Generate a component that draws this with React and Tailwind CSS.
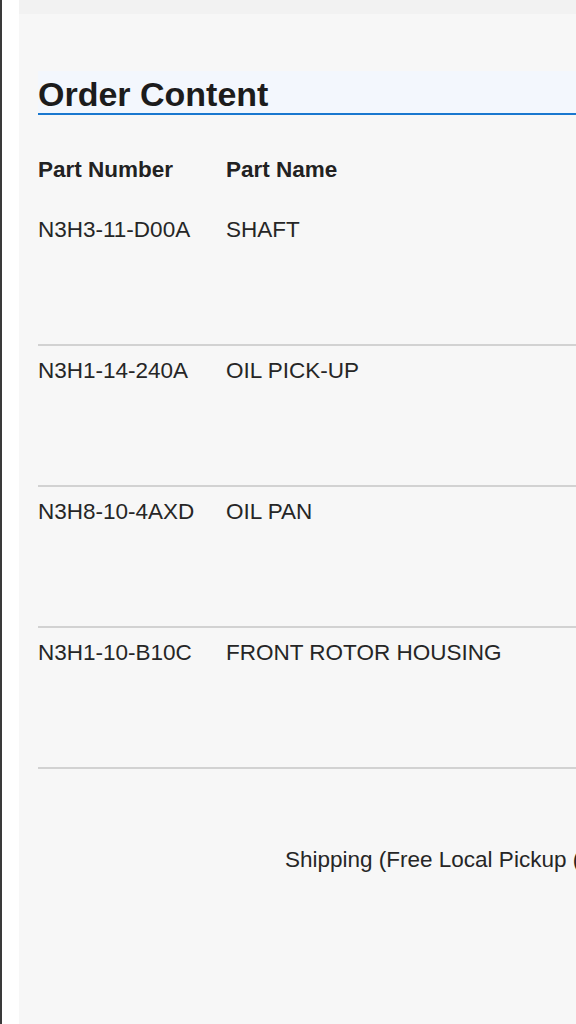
import React from 'react';

const parts = [
    { number: 'N3H3-11-D00A', name: 'SHAFT' },
    { number: 'N3H1-14-240A', name: 'OIL PICK-UP' },
    { number: 'N3H8-10-4AXD', name: 'OIL PAN' },
    { number: 'N3H1-10-B10C', name: 'FRONT ROTOR HOUSING' },
];

const App = () => {
    return (
        <div
            className="flex min-h-[1024px] w-[576px] overflow-hidden bg-white text-[#222]"
            style={{ fontFamily: '"Liberation Sans", Arial, sans-serif' }}
        >
            <div className="w-[2px] shrink-0 bg-[#3a3a3a]" />
            <div className="w-[17px] shrink-0 bg-white" />
            <div className="flex-1 min-w-0 bg-[#f7f7f7]">
                <div className="h-[14px] bg-[#f2f2f2]" />
                <div className="w-[900px] pl-[19px] pt-[57px]">
                    {/* заголовок блока */}
                    <div className="h-[44px] border-b-2 border-[#1a78cf] bg-[#f3f7fd]">
                        <h2 className="pt-[2px] text-[34px] font-bold leading-[42px] text-[#1c1c1c]">
                            Order Content
                        </h2>
                    </div>

                    <div className="mt-[42px] flex text-[22.5px] font-bold leading-[26px] text-[#222]">
                        <div className="w-[188px]">Part Number</div>
                        <div>Part Name</div>
                    </div>

                    <div className="mt-[22px]">
                        {parts.map((part) => (
                            <div
                                key={part.number}
                                className="flex border-b-2 border-[#d2d2d2] pt-[12px] pb-[101px] text-[22.5px] leading-[26px] text-[#262626]"
                            >
                                <div className="w-[188px]">{part.number}</div>
                                <div>{part.name}</div>
                            </div>
                        ))}
                    </div>

                    <div className="mt-[78px] pl-[247px] text-[22.5px] leading-[26px] text-[#262626]">
                        Shipping (Free Local Pickup (Toronto))
                    </div>
                </div>
            </div>
        </div>
    );
};

export default App;
